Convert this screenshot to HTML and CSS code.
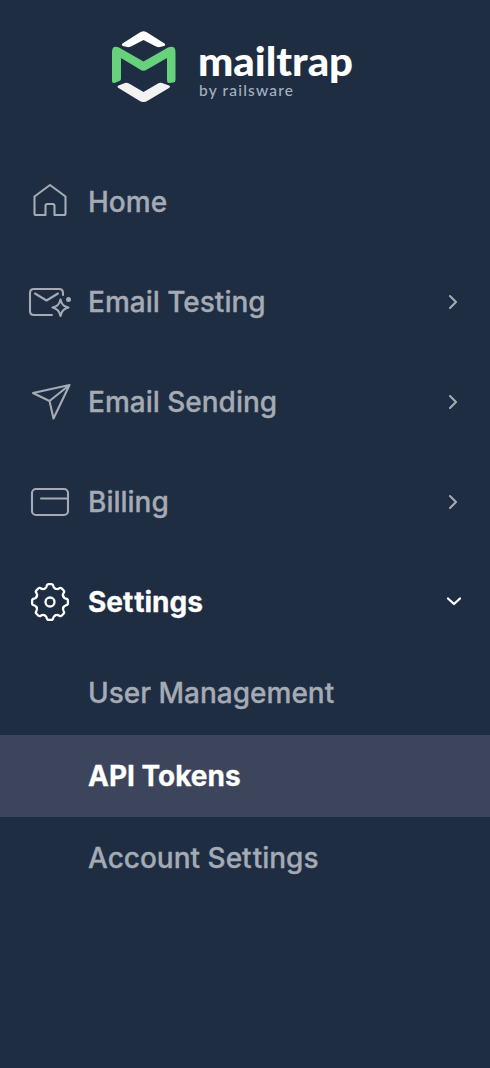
FILE: index.html
```html
<!DOCTYPE html>
<html lang="en">
<head>
<meta charset="utf-8">
<title>Mailtrap</title>
<link rel="stylesheet" href="styles.css">
</head>
<body>
<aside class="sidebar">
  <header class="brand">
    <svg class="brand-mark" width="66" height="74" viewBox="111 30 66 74">
      <path fill="#fff" d="M122.500 43.500L139 33Q143.500 29.500 148 33L164.500 43.500Q166 45 164 46L160 47Q157.500 47.500 155 46L143.500 40L132 46Q129.500 47.500 127 47L123 46Q121 45 122.500 43.500Z"/>
      <path fill="#67d17b" d="M112 52Q112 45 119 47.500L143.500 61.500L168 47.500Q175.500 45 175.500 52V80Q175.500 82 173.500 82.500L169 83Q167 83 167 80V58L147 69.500Q143.500 72 140 69.500L121 58V79Q121 80.500 119.500 81L114.500 83Q112 83.500 112 81Z"/>
      <path fill="#f2f2f2" d="M118.500 85.500L125 83Q127 82.500 129 83.500L143.500 92L158 83.500Q160 82.500 162 83L169 85.500Q171 86.500 169 88L148 100.500Q143.500 103.500 139 100.500L118.500 88Q116.500 86.500 118.500 85.500Z"/>
    </svg>
    <svg class="brand-text" width="170" height="84" viewBox="196 30 170 84">
      <text class="wordmark" x="198" y="75.500" textLength="155" lengthAdjust="spacingAndGlyphs">mailtrap</text>
      <text class="byline" x="199" y="95.500" textLength="94">by railsware</text>
    </svg>
  </header>
  <nav>
    <a class="item">
      <svg class="icon" viewBox="28 180 44 44"><path d="M34.500 196.500L50 185L65.500 196.500V213.500Q65.500 215 64 215H54.500V206Q54.500 204 52.500 204H47.500Q45.500 204 45.500 206V215H36Q34.500 215 34.500 213.500Z"/></svg>
      <span class="label">Home</span>
    </a>
    <a class="item">
      <svg class="icon" viewBox="28 280 44 44"><path d="M52 315H34Q30 315 30 311V293Q30 289 34 289H59Q63 289 63 293V295M35 293.500L46.500 300.500L58 293.500M60.500 299.500C61.500 304.500 63.500 306.500 68.500 307.500C63.500 308.500 61.500 311 60.500 316C59.500 311 57.500 308.500 52.500 307.500C57.500 306.500 59.500 304.500 60.500 299.500Z"/><circle class="dot" cx="68.500" cy="299.500" r="2.500"/></svg>
      <span class="label">Email Testing</span>
      <svg class="chevron" viewBox="444 292 20 20"><path d="M450 296L456 302L450 308"/></svg>
    </a>
    <a class="item">
      <svg class="icon" viewBox="28 380 44 44"><path d="M33 393L69.500 385L53.500 418.500L49.500 401ZM49.500 401L69.500 385"/></svg>
      <span class="label">Email Sending</span>
      <svg class="chevron" viewBox="444 292 20 20"><path d="M450 296L456 302L450 308"/></svg>
    </a>
    <a class="item">
      <svg class="icon" viewBox="28 480 44 44"><rect x="32" y="489" width="36" height="26" rx="4"/><path d="M41 498.500H68"/></svg>
      <span class="label">Billing</span>
      <svg class="chevron" viewBox="444 292 20 20"><path d="M450 296L456 302L450 308"/></svg>
    </a>
    <a class="item open">
      <svg class="icon" viewBox="-22 -22 44 44">
        <defs><path id="tooth" d="M-5.500 -13.300C-4.100 -13.900 -3.500 -14.400 -3.300 -15.800Q-3 -17.900 -1.200 -17.900H1.200Q3 -17.900 3.300 -15.800C3.500 -14.400 4.100 -13.900 5.500 -13.300"/></defs>
        <use href="#tooth"/><use href="#tooth" transform="rotate(45)"/><use href="#tooth" transform="rotate(90)"/><use href="#tooth" transform="rotate(135)"/><use href="#tooth" transform="rotate(180)"/><use href="#tooth" transform="rotate(225)"/><use href="#tooth" transform="rotate(270)"/><use href="#tooth" transform="rotate(315)"/>
        <circle r="4.500"/>
      </svg>
      <span class="label">Se<span class="loose">t</span>tings</span>
      <svg class="chevron" viewBox="444 592 20 20"><path d="M448 598.500L454 604L460 598.500"/></svg>
    </a>
    <div class="submenu">
      <a class="subitem">User Management</a>
      <a class="subitem current">API Tokens</a>
      <a class="subitem"><span>Account Se<span class="loose">t</span>tings</span></a>
    </div>
  </nav>
</aside>
</body>
</html>
```
FILE: styles.css
```css
* { box-sizing: border-box; }
body { margin: 0; background: #1f2d43; }
.sidebar {
  height: 1068px;
  background: #1f2d43;
  color: #a5abb4;
  font: 500 28px/34px Inter, sans-serif;
  -webkit-text-stroke: 0.3px currentColor;
}
.brand {
  display: flex;
  align-items: flex-start;
  height: 152px;
  padding: 30px 0 0 111px;
  -webkit-text-stroke: 0;
}
.brand-mark { flex: none; }
.brand-text { flex: none; margin-left: 19px; }
.wordmark { font: 900 39px Lato, sans-serif; fill: #fff; }
.byline { font: 500 15.5px Lato, sans-serif; fill: #a5b0bf; }
.item {
  display: flex;
  align-items: center;
  height: 100px;
  padding: 0 26px 0 28px;
}
.icon {
  flex: none;
  width: 44px;
  height: 44px;
  margin-right: 16px;
}
.icon, .chevron {
  fill: none;
  stroke: currentColor;
  stroke-width: 2.1;
  stroke-linejoin: round;
  stroke-linecap: round;
}
.dot { fill: currentColor; stroke: none; }
.label { flex: 1; }
/* opens up the tightly kerned double t */
.loose { letter-spacing: 1px; }
.chevron { width: 20px; height: 20px; }
.open, .current { color: #fff; font-weight: 700; }
.open .icon, .open .chevron { stroke-width: 2.3; }
.subitem {
  display: flex;
  align-items: center;
  height: 82px;
  padding-left: 88px;
}
.subitem:first-child { height: 83px; padding-bottom: 2px; }
.current { background: #3d455c; }
```
